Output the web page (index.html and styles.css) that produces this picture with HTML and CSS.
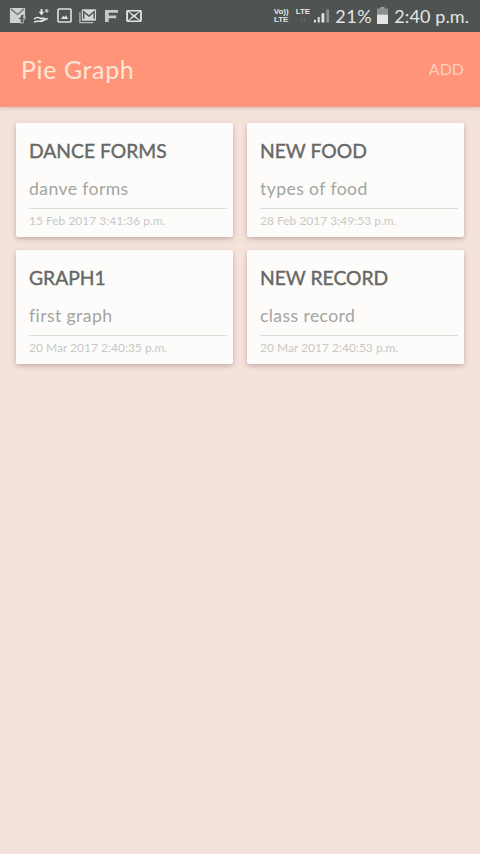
FILE: index.html
```html
<!DOCTYPE html>
<html lang="en">
<head>
<meta charset="utf-8">
<title>Pie Graph</title>
<link rel="stylesheet" href="styles.css">
</head>
<body>
<div class="statusbar">
  <div class="notifs">
    <svg class="ic" width="17" height="17" viewBox="0 0 18 18"><path d="M1 1h16v10l-5 6H1z" fill="#d0d2d0"/><path d="M2 2l7 6 7-6" fill="none" stroke="#7a7e7c" stroke-width="1.500"/><path d="M15 8c-3 0-3 2-3 3h-2v2h2v4h3v-4h2v-2h-2c0-1 0-1 2-1z" fill="#4f5351" stroke="#e4e6e4" stroke-width=".7"/></svg>
    <svg class="ic" width="17" height="15" viewBox="0 0 18 16"><path d="M1 12c3-3 5-2 7-1h4c1 0 1 2-1 2H8M1 15c4-2 6 0 9-1l6-3" fill="none" stroke="#e4e6e4" stroke-width="1.600"/><path d="M8 1h2v3h2l-3 4-3-4h2z" fill="#e4e6e4"/><circle cx="14.500" cy="3" r="2" fill="#b9bcba"/></svg>
    <svg class="ic" width="15" height="15" viewBox="0 0 15 15"><rect x="1" y="1" width="13" height="13" rx="1" fill="none" stroke="#dfe1df" stroke-width="1.600"/><path d="M4 11l2-3 2 1 1-2 2 4z" fill="#dfe1df"/></svg>
    <svg class="ic" width="18" height="16" viewBox="0 0 19 16"><path d="M1 4v11h14" fill="none" stroke="#b9bcba" stroke-width="1.400"/><rect x="3" y="1" width="15" height="12" rx="1" fill="#d6d8d6"/><path d="M5 11V3.500l5.500 4.500L16 3.500V11" fill="none" stroke="#4f5351" stroke-width="1.500"/></svg>
    <svg class="ic" width="15" height="14" viewBox="0 0 16 15"><path d="M1 1h14v3H5v3h8v3H5v4H1z" fill="#c8cac8"/></svg>
    <svg class="ic" width="16" height="12" viewBox="0 0 17 13"><rect x="0" y="0" width="17" height="13" rx="1.500" fill="#e0e2e0"/><path d="M2 2l5 4.500L2 11zM15 2l-5 4.500 5 4.500zM3 1.500l5.500 4 5.500-4M3 11.500l5.500-4 5.500 4" fill="#4f5351"/></svg>
  </div>
  <div class="sys">
    <div class="volte"><span>Vo))</span><span>LTE</span></div>
    <div class="volte lte"><span>LTE</span><span class="dim">↓↑</span></div>
    <svg class="signal" width="16" height="15" viewBox="0 0 17 15"><path d="M0 15h2v-3H0zM4 15h2V9H4zM8 15h3V5H8z" fill="#e4e6e4"/><path d="M13 15h3V1h-3z" fill="#8c908e"/></svg>
    <span class="pct">21%</span>
    <svg class="batt" width="11" height="17" viewBox="0 0 11 17"><rect x="3.500" y="0" width="4" height="2" fill="#9ea2a0"/><rect x="0" y="1.500" width="11" height="6" fill="#8c908e"/><rect x="0" y="7.500" width="11" height="9.500" fill="#e4e6e4"/></svg>
    <span class="time">2:40 p.m.</span>
  </div>
</div>
<header class="appbar">
  <h1 class="title">Pie Graph</h1>
  <span class="add">ADD</span>
</header>
<main class="grid">
  <article class="card">
    <h2 class="name">DANCE FORMS</h2>
    <p class="desc">danve forms</p>
    <p class="date">15 Feb 2017 3:41:36 p.m.</p>
  </article>
  <article class="card">
    <h2 class="name">NEW FOOD</h2>
    <p class="desc">types of food</p>
    <p class="date">28 Feb 2017 3:49:53 p.m.</p>
  </article>
  <article class="card">
    <h2 class="name">GRAPH1</h2>
    <p class="desc">first graph</p>
    <p class="date">20 Mar 2017 2:40:35 p.m.</p>
  </article>
  <article class="card">
    <h2 class="name">NEW RECORD</h2>
    <p class="desc">class record</p>
    <p class="date">20 Mar 2017 2:40:53 p.m.</p>
  </article>
</main>
</body>
</html>
```
FILE: styles.css
```css
* { box-sizing: border-box; }
html, body { margin: 0; height: 100%; }
body {
  width: 480px;
  height: 854px;
  overflow: hidden;
  background: #f4e2db;
  font-family: "Lato", "Open Sans", sans-serif;
  display: flex;
  flex-direction: column;
}
.statusbar {
  height: 32px;
  flex: none;
  background: #4f5351;
  color: #e4e6e4;
  display: flex;
  justify-content: space-between;
  align-items: center;
  padding: 0 11px 1px 9px;
}
.notifs { display: flex; align-items: center; gap: 7px; }
.sys { display: flex; align-items: center; }
.volte {
  display: flex;
  flex-direction: column;
  font: 700 8px/8px "Liberation Sans", sans-serif;
  align-items: center;
  margin-right: 7px;
}
.volte.lte { margin-right: 4px; }
.volte .dim { color: #8c908e; font-size: 6px; }
.signal { margin-right: 5px; }
.pct { font-size: 18px; letter-spacing: .6px; margin-right: 5px; }
.batt { margin-right: 6px; }
.time { font-size: 18px; letter-spacing: .1px; }
.appbar {
  height: 75px;
  flex: none;
  background: #ff9478;
  box-shadow: 0 1px 4px rgba(150, 100, 85, .3);
  display: flex;
  justify-content: space-between;
  align-items: center;
  padding: 0 16px 2px 21px;
}
.title {
  margin: 0;
  font-size: 25px;
  font-weight: 400;
  letter-spacing: .6px;
  color: #fde6d6;
}
.add { font-size: 16px; color: #fbd0c2; }
.grid {
  display: grid;
  grid-template-columns: 217px 217px;
  grid-auto-rows: 114px;
  gap: 13px 14px;
  padding: 16px 16px 0;
}
.card {
  background: #fdfcfa;
  border-radius: 2px;
  box-shadow: 0 2px 5px rgba(120, 90, 80, .38);
  padding: 0 6px 0 13px;
  display: flex;
  flex-direction: column;
}
.name {
  margin: 15px 0 0;
  font-size: 19.300px;
  line-height: 26px;
  font-weight: 400;
  -webkit-text-stroke: .4px #666866;
  color: #666866;
  white-space: nowrap;
}
.desc {
  margin: 13px 0 0;
  font-size: 17.600px;
  line-height: 24px;
  color: #a3a5a2;
  letter-spacing: .4px;
  white-space: nowrap;
}
.date {
  margin: 7px 0 0;
  padding-top: 4px;
  border-top: 1px solid #dcdcd9;
  font-size: 12px;
  line-height: 16px;
  color: #c8c8c5;
  white-space: nowrap;
}
```
